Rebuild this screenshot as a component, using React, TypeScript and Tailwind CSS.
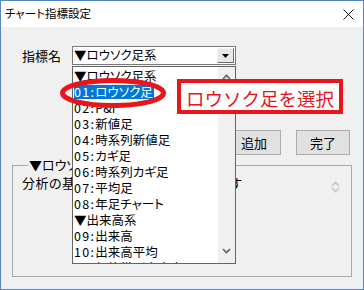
const items = [
  { code: "", label: "▼ロウソク足系" },
  { code: "01:", label: "ロウソク足", selected: true },
  { code: "02:", label: "P&F" },
  { code: "03:", label: "新値足" },
  { code: "04:", label: "時系列新値足" },
  { code: "05:", label: "カギ足" },
  { code: "06:", label: "時系列カギ足" },
  { code: "07:", label: "平均足" },
  { code: "08:", label: "年足チャート" },
  { code: "", label: "▼出来高系" },
  { code: "09:", label: "出来高" },
  { code: "10:", label: "出来高平均" },
  { code: "11:", label: "価格帯別出来高" },
]

function Chevron({ up, color }: { up?: boolean; color: string }) {
  return (
    <svg width="9" height="6" viewBox="0 0 9 6">
      <path
        d={up ? "M1 5 L4.5 1.5 L8 5" : "M1 1 L4.5 4.5 L8 1"}
        fill="none"
        stroke={color}
        strokeWidth="1.6"
      />
    </svg>
  )
}

function Btn({ children }: { children: React.ReactNode }) {
  return (
    <div className="w-[54px] h-[25px] border border-[#adadad] bg-[#e1e1e1] flex items-center justify-center text-[13px] text-black">
      {children}
    </div>
  )
}

export default function App() {
  return (
    <div className="relative w-[364px] h-[290px] overflow-hidden border border-[#5585c4] bg-[#f0f0f0] flex flex-col font-['Noto_Sans_CJK_JP',sans-serif] [font-feature-settings:'palt'] text-black">
      {/* title bar */}
      <div className="h-[26px] bg-white flex items-center justify-between pl-[4px] pr-[9px]">
        <span className="text-[11.5px] leading-none">チャート指標設定</span>
        <svg width="11" height="11" viewBox="0 0 11 11">
          <path d="M0.5 0.5 L10.5 10.5 M10.5 0.5 L0.5 10.5" stroke="#111" strokeWidth="1" />
        </svg>
      </div>

      {/* body */}
      <div className="flex-1 flex flex-col">
        <div className="flex items-center pt-[19px] pl-[21px]">
          <span className="w-[50px] text-[13px] leading-none">指標名</span>
          <div className="w-[164px] h-[19px] border border-[#7a7a7a] bg-white flex items-center">
            <span className="flex-1 pl-[1px] text-[12.5px] leading-none">▼ロウソク足系</span>
            <div className="w-[17px] h-[15px] mr-[1px] bg-[#e8e8e8] border border-t-[#f4f4f4] border-l-[#f4f4f4] border-r-[#6f6f6f] border-b-[#6f6f6f] flex items-center justify-center">
              <svg width="7" height="4" viewBox="0 0 7 4">
                <path d="M0 0 H7 L3.5 4 Z" fill="#000" />
              </svg>
            </div>
          </div>
        </div>

        <div className="flex justify-end gap-[15px] pr-[13px] mt-[65px]">
          <Btn>追加</Btn>
          <Btn>完了</Btn>
        </div>

        <fieldset className="mt-[2px] mx-[11px] h-[120px] border border-[#a8a8a8] px-[7px] pb-[4px] flex flex-col">
          <legend className="ml-[8px] px-[1px] text-[13px] leading-[16px]">▼ロウソク足系：ロウソク足</legend>
          <div className="flex-1 flex">
            <p className="flex-1 pl-[2px] pt-[2px] text-[13px] leading-[16px] tracking-[0.5px] whitespace-nowrap overflow-hidden">
              分析の基本となる価格推移を示します
            </p>
            <div className="w-[17px] flex flex-col items-center justify-between pt-[8px] pb-[8px]">
              <Chevron up color="#c4c4c4" />
              <Chevron color="#c4c4c4" />
            </div>
          </div>
        </fieldset>
      </div>

      {/* open dropdown list */}
      <div className="absolute left-[71px] top-[65px] w-[164px] h-[198px] border border-[#646464] bg-white flex">
        <div className="flex-1 pt-[1px] pl-[1px] overflow-hidden">
          {items.map((item) => (
            <div key={item.code + item.label} className="h-[16px] flex items-center text-[12.5px] leading-none whitespace-nowrap">
              <span
                className={
                  item.selected
                    ? "bg-[#0078d7] text-white h-[14px] flex items-center pr-[1px]"
                    : "flex items-center"
                }
              >
                {item.code && <span className="tracking-[1.3px]">{item.code}</span>}
                {item.label}
              </span>
            </div>
          ))}
        </div>
        <div className="w-[17px] bg-[#f0f0f0] flex flex-col items-center justify-between pt-[7px] pb-[9px]">
          <Chevron up color="#5f5f5f" />
          <Chevron color="#5f5f5f" />
        </div>
      </div>

      {/* annotation: ellipse */}
      <svg className="absolute left-[57px] top-[74px]" width="110" height="36" viewBox="0 0 110 36">
        <ellipse cx="55" cy="18" rx="50.5" ry="12.5" fill="none" stroke="#e8151d" strokeWidth="5" />
      </svg>

      {/* annotation: callout */}
      <div className="absolute left-[176px] top-[78px] w-[166px] h-[35px] border-[4px] border-[#e8151d] bg-white flex items-center justify-center pt-[3px] text-[18.5px] leading-none text-[#e8151d] [font-feature-settings:normal]">
        ロウソク足を選択
      </div>
    </div>
  )
}
